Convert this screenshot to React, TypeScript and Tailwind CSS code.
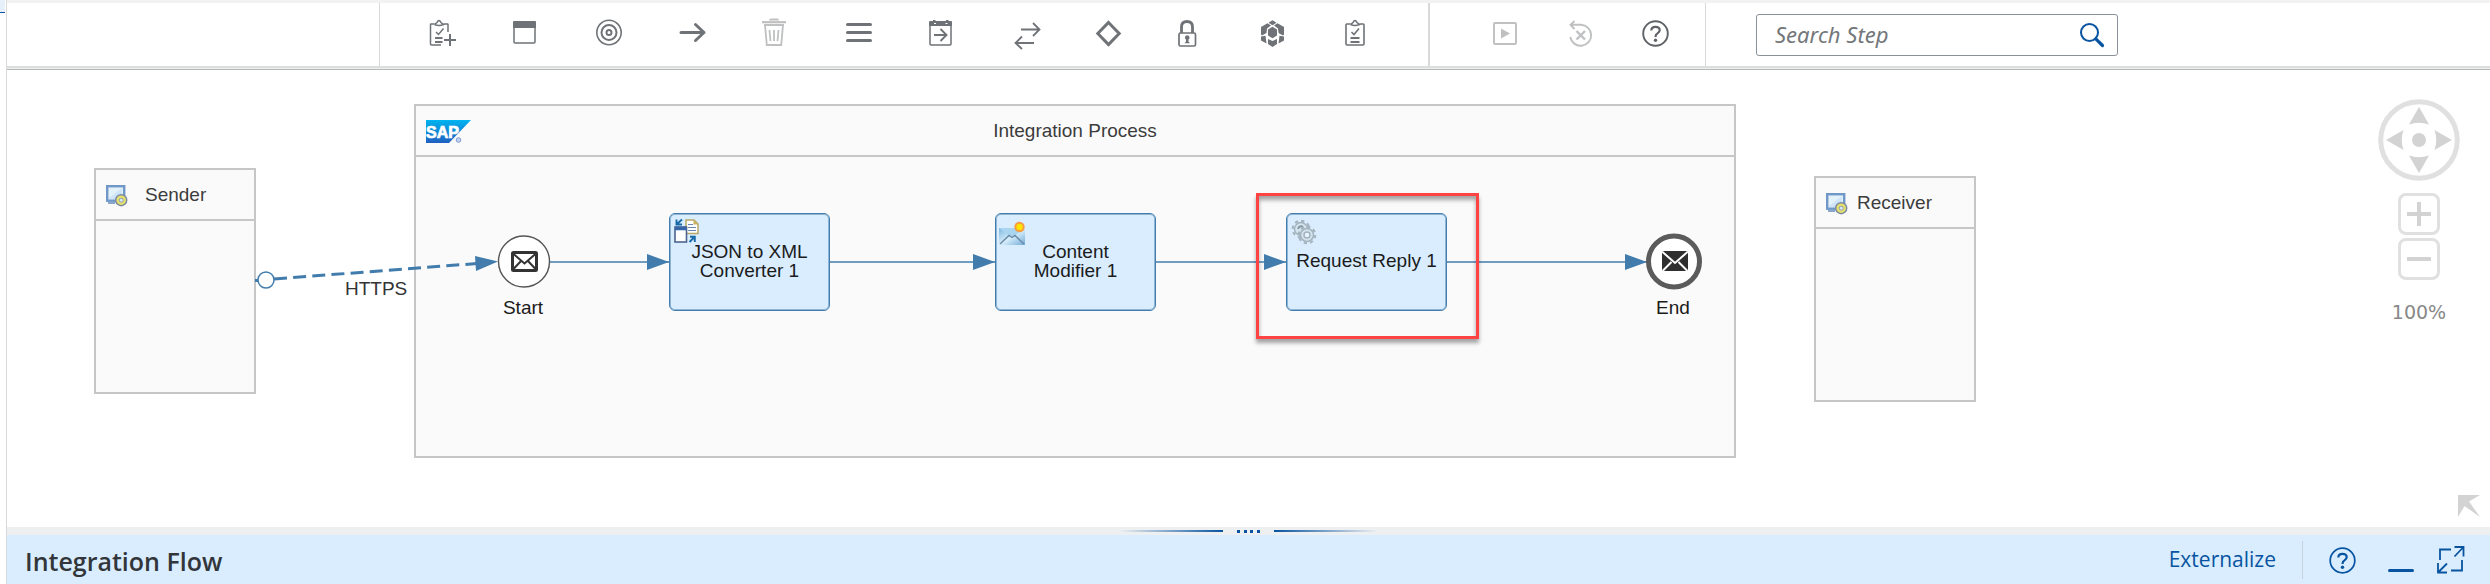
import type { ReactNode } from "react";

type Glyph = { label: string; width: number; inset: number; dim?: boolean; art: ReactNode };

const steps: Glyph[] = [
  {
    label: "Add flow step", width: 28, inset: 0,
    art: (
      <g fill="none" stroke="currentColor" strokeWidth="1.500">
        <path d="M5.500 6H2Q1.500 6 1.500 6.500V26Q1.500 27 2.500 27H12M14.500 6H18.500Q19 6 19 6.500V14" />
        <path d="M5.500 6.500L8 4.500Q10 .5 12 4.500L14.500 6.500Q10 8.500 5.500 6.500" />
        <path d="M7 14L9.500 16.500L14.500 10.500" />
        <path d="M6 20H13.500M6 24H13.500" strokeWidth="2" />
        <path d="M21 16V28M15 22H27" strokeWidth="2" />
      </g>
    ),
  },
  {
    label: "Process", width: 27, inset: 2,
    art: (
      <>
        <rect x="1" y="4" width="21" height="21" rx="1" fill="none" stroke="currentColor" strokeWidth="1.500" />
        <path d="M0 4Q0 3 1 3H22Q23 3 23 4V10H0z" />
      </>
    ),
  },
  {
    label: "Events", width: 33, inset: 4,
    art: (
      <g fill="none" stroke="currentColor">
        <circle cx="13" cy="14.500" r="12.200" strokeWidth="1.600" />
        <circle cx="13" cy="14.500" r="7.500" strokeWidth="2" />
        <circle cx="13" cy="14.500" r="2.500" strokeWidth="2" />
      </g>
    ),
  },
  {
    label: "Connect", width: 27, inset: 0,
    art: <path d="M2 14.500H25M16.500 6.500L25 14.500L16.500 22.500" fill="none" stroke="currentColor" strokeWidth="3" strokeLinecap="round" strokeLinejoin="round" />,
  },
  {
    label: "Delete", width: 28, inset: 2, dim: true,
    art: (
      <g fill="none" stroke="currentColor">
        <path d="M0 4.200H24" strokeWidth="2.200" />
        <path d="M8 2.500Q8 1.500 9 1.500H15Q16 1.500 16 2.500" strokeWidth="2" />
        <path d="M2 7H22M3 7L4.800 27H19.200L21 7" strokeWidth="1.800" />
        <path d="M7.500 12L8.500 23M12 12V23M16.500 12L15.500 23" strokeWidth="1.800" />
      </g>
    ),
  },
  {
    label: "Participants", width: 32, inset: 4,
    art: <path d="M1.500 6.500H24.500M1.500 14.500H24.500M1.500 22.500H24.500" fill="none" stroke="currentColor" strokeWidth="3" strokeLinecap="round" />,
  },
  {
    label: "Mapping", width: 26, inset: 1,
    art: (
      <>
        <path d="M0 4Q0 3 1 3H4V2H6.500V3H17V2H19.500V3H22Q23 3 23 4V8H0z" />
        <path d="M5 5.500H7M16.500 5.500H18.500" stroke="#fff" strokeWidth="1.200" />
        <rect x="1" y="7" width="21" height="20" rx="1" fill="none" stroke="currentColor" strokeWidth="1.500" />
        <path d="M5 17H17M11.500 11L17.500 17L11.500 23" fill="none" stroke="currentColor" strokeWidth="1.900" />
      </>
    ),
  },
  {
    label: "Transformation", width: 34, inset: 6,
    art: <path d="M7 11.500H25.500M19 5L25.500 11.500L19 18M20 25H1.500M8 18.500L1.500 25L8 31" fill="none" stroke="currentColor" strokeWidth="1.800" />,
  },
  {
    label: "Routing", width: 26, inset: 0,
    art: <path d="M12.500 4.500L23.200 15.500L12.500 26.500L1.800 15.500z" fill="none" stroke="currentColor" strokeWidth="3" />,
  },
  {
    label: "Security", width: 24, inset: 2,
    art: (
      <>
        <path d="M3.500 15V9Q3.500 3.500 9 3.500T14.500 9V15" fill="none" stroke="currentColor" strokeWidth="2.800" />
        <rect x="1" y="15" width="16.500" height="13" rx="1.500" fill="none" stroke="currentColor" strokeWidth="1.700" />
        <path d="M9.200 17.200a2.400 2.400 0 0 1 1.300 4.400v1.800l1.500 1.800H6.500L8 23.400V21.600a2.400 2.400 0 0 1 1.200-4.400z" />
      </>
    ),
  },
  {
    label: "Persistence", width: 34, inset: 7,
    art: (
      <path d="M11.500 2.200L15.500 4.800L11.500 7.200L7.500 4.800zM6.500 5.200L10 7.400L6 10.500L5.500 15L1 17.500L0 16.500V9zM16.500 5.200L23 9V16.500L22 17.500L17.500 15L17 10.500L13 7.400zM11.500 8.800L16 11.500V17.500L11.500 20.200L7 17.500V11.500zM0 18.500L4.500 17.800L5.500 25.500L0 22.500zM23 18.500L18.500 17.800L17.500 25.500L23 22.500zM7 21L11.500 23L16 21V26L11.500 29L7 26z" />
    ),
  },
  {
    label: "Validator", width: 24, inset: 3,
    art: (
      <g fill="none" stroke="currentColor" strokeWidth="1.600">
        <path d="M5.500 6H1.800Q1 6 1 6.800V26Q1 27 2 27H18Q19 27 19 26V6.800Q19 6 18.200 6H14.500" />
        <path d="M5.500 6.500L8 4.500Q10 .5 12 4.500L14.500 6.500Q10 8.500 5.500 6.500" />
        <path d="M6.500 14L9 16.500L14 10.500" />
        <path d="M5.500 20H14.500M5.500 24H14.500" strokeWidth="2" />
      </g>
    ),
  },
];

const actions: Glyph[] = [
  {
    label: "Simulate", width: 26, inset: 1, dim: true,
    art: (
      <>
        <rect x="1" y="5" width="22" height="21" rx="1" fill="none" stroke="currentColor" strokeWidth="1.900" />
        <path d="M8 10.500L17 15.500L8 20.500z" />
      </>
    ),
  },
  {
    label: "Reset simulation", width: 24, inset: 1, dim: true,
    art: (
      <g fill="none" stroke="currentColor" strokeWidth="1.900">
        <path d="M5.500 3L1.500 6.800L5.500 11M1.500 6.800H12A10.500 10.500 0 1 1 1.300 19" />
        <path d="M7.500 13L16 21.500M16 13L7.500 21.500" strokeWidth="2.400" />
      </g>
    ),
  },
];

function HelpIcon({ heavy = false }: { heavy?: boolean }) {
  return (
    <svg width="28" height="30" viewBox="0 0 28 30" fill="none" stroke="currentColor" strokeWidth={heavy ? 1.9 : 1.7} className="block">
      <circle cx="13.500" cy="15.500" r="12.300" />
      <path d="M9.300 12.500Q9.300 8.800 13.500 8.800T17.700 12.300Q17.700 14 15.500 15.400Q13.500 16.500 13.500 19" strokeWidth="2.200" />
      <circle cx="13.500" cy="22.300" r="1.700" fill="currentColor" stroke="none" />
    </svg>
  );
}

function ToolButton({ glyph }: { glyph: Glyph }) {
  return (
    <button type="button" aria-label={glyph.label} disabled={glyph.dim} className="shrink-0 text-[#6f7377] disabled:text-[#bfc0c1]">
      <svg width={glyph.width} height="30" viewBox={`${-glyph.inset} 0 ${glyph.width} 30`} fill="currentColor" className="block overflow-visible">
        {glyph.art}
      </svg>
    </button>
  );
}

function Toolbar() {
  return (
    <div role="toolbar" className="flex h-[63px] shrink-0 bg-white">
      <div className="w-[373px] shrink-0 border-r border-[#d9d9d9]" />
      <div className="flex shrink-0 items-center gap-[54px] border-r-2 border-[#d9d9d9] pr-[62px] pb-[3px] pl-[49px]">
        {steps.map((g) => <ToolButton key={g.label} glyph={g} />)}
      </div>
      <div className="flex shrink-0 items-center gap-[50px] border-r border-[#d9d9d9] pr-[35px] pb-[3px] pl-[62px]">
        {actions.map((g) => <ToolButton key={g.label} glyph={g} />)}
        <button type="button" aria-label="Help" className="text-[#5f6367]"><HelpIcon heavy /></button>
      </div>
      <form className="flex flex-1 items-center pl-[50px]" onSubmit={(e) => e.preventDefault()}>
        <div className="flex h-[42px] w-[362px] items-center rounded-[3px] border border-[#89919a] bg-white pr-3 pl-[18px]">
          <input type="text" aria-label="Search Step" placeholder="Search Step" className="min-w-0 flex-1 bg-transparent font-['Noto_Sans',sans-serif] text-[22px] text-[#32363a] italic outline-none placeholder:text-[#74777a]" />
          <button type="submit" aria-label="Search" className="text-[#0854a0]">
            <svg width="26" height="26" viewBox="0 0 26 26" fill="none" stroke="currentColor" className="block">
              <circle cx="10.500" cy="10.500" r="8.500" strokeWidth="2" />
              <path d="M16.800 16.800L23.500 23.500" strokeWidth="3.200" strokeLinecap="round" />
            </svg>
          </button>
        </div>
      </form>
    </div>
  );
}

function SystemIcon() {
  return (
    <svg width="22" height="22" viewBox="0 0 22 22" fill="none">
      <rect x="1.200" y="1.200" width="17" height="14.500" fill="#e3f1fb" stroke="#6f97c8" strokeWidth="2.400" />
      <path d="M3 13L16 3V14H3z" fill="#cfe5f7" />
      <path d="M2 18H9" stroke="#7d9cc4" strokeWidth="1.800" />
      <circle cx="15.200" cy="15.200" r="5.500" fill="#e6e16a" stroke="#7c8ba0" strokeWidth="1.500" />
      <circle cx="15.200" cy="15.200" r="2" fill="#dbe9f5" stroke="#8ea0ad" />
    </svg>
  );
}

function Participant({ name, place, text }: { name: string; place: string; text: string }) {
  return (
    <section className={`absolute h-[226px] w-[162px] border-2 border-[#c6c6c6] bg-[#fafafa] ${place}`}>
      <header className={`flex h-[51px] items-center border-b-2 border-[#c6c6c6] pt-0.5 pl-2.5 ${text}`}>
        <SystemIcon />
        <span className="text-[#3c3c3c]">{name}</span>
      </header>
    </section>
  );
}

function SapLogo() {
  return (
    <svg width="45" height="23" viewBox="0 0 45 23" className="absolute left-2.5">
      <defs>
        <linearGradient id="sap" x1="0" y1="0" x2="0" y2="1">
          <stop offset="0" stopColor="#00b4f0" />
          <stop offset="1" stopColor="#1f5fc0" />
        </linearGradient>
      </defs>
      <path d="M0 0H45L23 23H0z" fill="url(#sap)" />
      <text x="0" y="17.500" fontFamily="Liberation Sans, sans-serif" fontWeight="700" fontSize="16" fill="#fff" stroke="#fff" strokeWidth=".7">SAP</text>
      <circle cx="32.500" cy="20" r="2.300" fill="#c5d3ef" stroke="#7c9ad6" />
    </svg>
  );
}

function ConverterIcon() {
  return (
    <svg width="25" height="25" viewBox="0 0 25 25" fill="none">
      <path d="M12 2H20L24 6V15.500H12z" fill="#fff" stroke="#b9a765" strokeWidth="1.500" />
      <path d="M14 6.500H19M14 9.500H22M14 12.500H22" stroke="#6c86b5" strokeWidth="1.200" />
      <path d="M19.500 1.500V6.500H24z" fill="#c9b15f" />
      <rect x="1" y="9" width="11.500" height="15" fill="#fff" stroke="#4d648f" strokeWidth="1.600" />
      <path d="M1 10.500H12.500" stroke="#3465a8" strokeWidth="3.500" />
      <path d="M8 1.500L3 6M2.500 1.500V6.500H8M15.500 24L20 19.500M16 18.800H20.800V24" stroke="#1769a8" strokeWidth="1.900" />
    </svg>
  );
}

function ModifierIcon() {
  return (
    <svg width="27" height="25" viewBox="0 0 27 25">
      <defs>
        <linearGradient id="mail" x1="0" y1="0" x2="1" y2="1">
          <stop offset="0" stopColor="#79b5dd" />
          <stop offset=".5" stopColor="#d8eefb" />
          <stop offset="1" stopColor="#6fa9d8" />
        </linearGradient>
      </defs>
      <rect x="0" y="7" width="26" height="17" fill="url(#mail)" />
      <path d="M0 7H26L15 15.500H11z" fill="#a9d5f0" />
      <path d="M1 23L10 14.500L13 16.500L16 14.500L25 23" fill="none" stroke="#6a8aa5" strokeWidth="1.400" />
      <circle cx="20.500" cy="6" r="5.200" fill="#f79a45" />
      <circle cx="20.500" cy="6" r="3.200" fill="#ffe400" />
    </svg>
  );
}

function GearsIcon() {
  return (
    <svg width="26" height="26" viewBox="0 0 26 26" fill="none" stroke="#a3b2bd">
      <circle cx="10" cy="10" r="8.300" strokeWidth="2" strokeDasharray="3.300 3.200" />
      <circle cx="10" cy="10" r="6.500" strokeWidth="1.400" fill="#d3e4ef" />
      <path d="M7 10Q8 6.500 12 7.500" strokeWidth="1.800" stroke="#8797a3" />
      <circle cx="16" cy="16" r="8.300" strokeWidth="2" strokeDasharray="3.300 3.200" />
      <circle cx="16" cy="16" r="6.500" strokeWidth="1.500" fill="#d3e4ef" />
      <circle cx="16" cy="16" r="3" strokeWidth="1.500" fill="#e8f3fb" />
    </svg>
  );
}

function Step({ place, iconPlace, icon, children }: { place: string; iconPlace: string; icon: ReactNode; children: ReactNode }) {
  return (
    <button type="button" className={`absolute top-[143px] flex h-[98px] w-[161px] items-center justify-center rounded-[6px] border border-[#427cac] bg-[#d9edff] pb-[3px] text-center leading-[19px] text-[#1b1b1b] shadow-[inset_0_0_0_1px_#8fb6d6] ${place}`}>
      <span className={`absolute ${iconPlace}`}>{icon}</span>
      <span className="relative">{children}</span>
    </button>
  );
}

function Arrow({ from, to }: { from: number; to: number }) {
  return (
    <>
      <path d={`M${from} 192H${to}`} stroke="#427cac" strokeWidth="1.500" />
      <path d={`M${to - 22} 184L${to} 192L${to - 22} 200z`} fill="#427cac" />
    </>
  );
}

function Connectors() {
  return (
    <svg width="1700" height="400" viewBox="0 0 1700 400" fill="none" className="pointer-events-none absolute top-0 left-0">
      <path d="M248 210.500H252" stroke="#427cac" strokeWidth="3" />
      <path d="M267 209L470 193.500" stroke="#427cac" strokeWidth="3" strokeDasharray="13 6.200" />
      <circle cx="259" cy="210" r="8" fill="#fff" stroke="#427cac" strokeWidth="1.500" />
      <path d="M468 186L491 191.500L469 201z" fill="#427cac" />
      <circle cx="517" cy="191.500" r="25.500" fill="#fff" stroke="#555" strokeWidth="1.400" />
      <rect x="505.500" y="182.500" width="24" height="18" rx="1" stroke="#333" strokeWidth="3" fill="#fff" />
      <path d="M506 183.500L517.500 193.500L529 183.500M506 199.500L514 191M529 199.500L521 191" stroke="#333" strokeWidth="2" />
      <Arrow from={543} to={662} />
      <Arrow from={823} to={988} />
      <Arrow from={1149} to={1279} />
      <Arrow from={1440} to={1640} />
      <circle cx="1667" cy="191.500" r="25.500" fill="#fff" stroke="#5b5b5b" strokeWidth="5" />
      <rect x="1655" y="181" width="26" height="20" fill="#2f2f2f" />
      <path d="M1655 181.500L1668 193L1681 181.500M1655.500 201L1664.500 192M1680.500 201L1671.500 192" stroke="#fff" strokeWidth="2" />
    </svg>
  );
}

function ZoomControls() {
  return (
    <div className="absolute top-[29px] right-[30px] flex w-[82px] flex-col items-center">
      <button type="button" aria-label="Pan">
        <svg width="82" height="82" viewBox="0 0 82 82" fill="#d3d3d3" className="block">
          <circle cx="41" cy="41" r="38.300" fill="none" stroke="#e0e0e0" strokeWidth="5" />
          <circle cx="41" cy="41" r="7" />
          <path d="M41 8L51 25.500Q41 22 31 25.500zM41 74L51 56.500Q41 60 31 56.500zM8 41L25.500 31Q22 41 25.500 51zM74 41L56.500 31Q60 41 56.500 51z" />
        </svg>
      </button>
      <button type="button" aria-label="Zoom in" className="mt-3 flex size-[42px] items-center justify-center rounded-[8px] border-3 border-[#e0e0e0]">
        <svg width="24" height="24" viewBox="0 0 24 24" stroke="#d3d3d3" strokeWidth="4"><path d="M0 12H24M12 0V24" /></svg>
      </button>
      <button type="button" aria-label="Zoom out" className="mt-[3px] flex size-[42px] items-center justify-center rounded-[8px] border-3 border-[#e0e0e0]">
        <svg width="24" height="24" viewBox="0 0 24 24" stroke="#d3d3d3" strokeWidth="4"><path d="M0 12H24" /></svg>
      </button>
      <output className="mt-5 font-['DejaVu_Sans',sans-serif] text-[19px] leading-6 text-[#888]">100%</output>
    </div>
  );
}

function Canvas() {
  return (
    <main className="relative min-h-[457px] flex-1 overflow-hidden bg-white font-['Liberation_Sans',Arial,sans-serif] text-[19px]">
      <Participant name="Sender" place="left-[87px] top-[98px]" text="gap-[17px]" />
      <section className="absolute top-[34px] left-[407px] h-[354px] w-[1322px] border-2 border-[#c6c6c6] bg-[#fafafa]">
        <header className="flex h-[51px] items-center justify-center border-b-2 border-[#c6c6c6] pt-0.5">
          <SapLogo />
          <span className="text-[#3c3c3c]">Integration Process</span>
        </header>
      </section>
      <Participant name="Receiver" place="left-[1807px] top-[106px]" text="gap-[9px]" />
      <Connectors />
      <span className="absolute top-[207px] left-[338px] leading-6 text-[#333]">HTTPS</span>
      <span className="absolute top-[226px] left-[476px] w-20 text-center leading-6 text-[#1b1b1b]">Start</span>
      <span className="absolute top-[226px] left-[1626px] w-20 text-center leading-6 text-[#1b1b1b]">End</span>
      <Step place="left-[662px]" iconPlace="left-1 top-1" icon={<ConverterIcon />}>JSON to XML<br />Converter 1</Step>
      <Step place="left-[988px]" iconPlace="left-[3px] top-[7px]" icon={<ModifierIcon />}>Content<br />Modifier 1</Step>
      <Step place="left-[1279px]" iconPlace="left-1 top-[5px]" icon={<GearsIcon />}>Request Reply 1</Step>
      <div className="pointer-events-none absolute top-[123px] left-[1249px] h-[146px] w-[223px] border-3 border-[#ff4242] shadow-[0_4px_4px_rgba(0,0,0,0.35),inset_0_4px_4px_rgba(0,0,0,0.35)]" />
      <ZoomControls />
      <button type="button" aria-label="Show overview" className="absolute right-2.5 bottom-2.5">
        <svg width="22" height="22" viewBox="0 0 22 22" fill="#d3d3d3" className="block"><path d="M0 0H22L11 6.500L22 22L6.500 11L0 22z" /></svg>
      </button>
    </main>
  );
}

function Splitter() {
  return (
    <div role="separator" className="flex h-2 shrink-0 items-center justify-center bg-[#edeff0]">
      <div className="h-0.5 w-[103px] bg-linear-to-l from-[#0854a0] to-transparent" />
      <div className="mx-3.5 flex w-[23px] justify-between">
        <i className="h-[3px] w-[3px] bg-[#0854a0]" />
        <i className="h-[3px] w-[3px] bg-[#0854a0]" />
        <i className="h-[3px] w-[3px] bg-[#0854a0]" />
        <i className="h-[3px] w-[3px] bg-[#0854a0]" />
      </div>
      <div className="h-0.5 w-[103px] bg-linear-to-r from-[#0854a0] to-transparent" />
    </div>
  );
}

function Footer() {
  return (
    <footer className="flex h-[49px] shrink-0 items-center bg-[#d9edff] pr-[25px] pl-[18px] text-[#0854a0]">
      <h2 className="flex-1 pt-1 font-['Open_Sans',sans-serif] text-[25px] font-semibold text-[#32363a]">Integration Flow</h2>
      <button type="button" className="mr-[26px] font-['Open_Sans',sans-serif] text-[21px]">Externalize</button>
      <div className="mr-[26px] h-[38px] w-px bg-[#c8d3dc]" />
      <button type="button" aria-label="Help"><HelpIcon /></button>
      <button type="button" aria-label="Minimize" className="ml-[30px]">
        <svg width="28" height="30" viewBox="0 0 28 30" className="block"><path d="M2.500 25.500H25.500" stroke="currentColor" strokeWidth="3" strokeLinecap="round" /></svg>
      </button>
      <button type="button" aria-label="Maximize" className="ml-[22px]">
        <svg width="28" height="30" viewBox="0 0 28 30" fill="none" stroke="currentColor" strokeWidth="1.800" className="block">
          <path d="M14 4.500H3V15M14 25.500H25V15" />
          <path d="M17.500 2H26.500V11.500M26.500 2L17.500 11.500M1 18V27.500H10M1 27.500L10 18.500" />
        </svg>
      </button>
    </footer>
  );
}

export default function App() {
  return (
    <div className="flex min-h-screen overflow-hidden bg-white">
      <aside className="w-1.5 shrink-0">
        <div className="h-[13px] w-[5px] border-b border-[#0854a0] bg-[#e5f0fa]" />
      </aside>
      <div className="flex min-w-0 flex-1 flex-col border-l border-[#d9d9d9]">
        <div className="h-[3px] shrink-0 bg-[#f2f2f2]" />
        <Toolbar />
        <div className="h-1 shrink-0 border-t-2 border-b border-t-[#dcdedd] border-b-[#b4b7b6] bg-[#eee]" />
        <Canvas />
        <Splitter />
        <Footer />
      </div>
    </div>
  );
}
